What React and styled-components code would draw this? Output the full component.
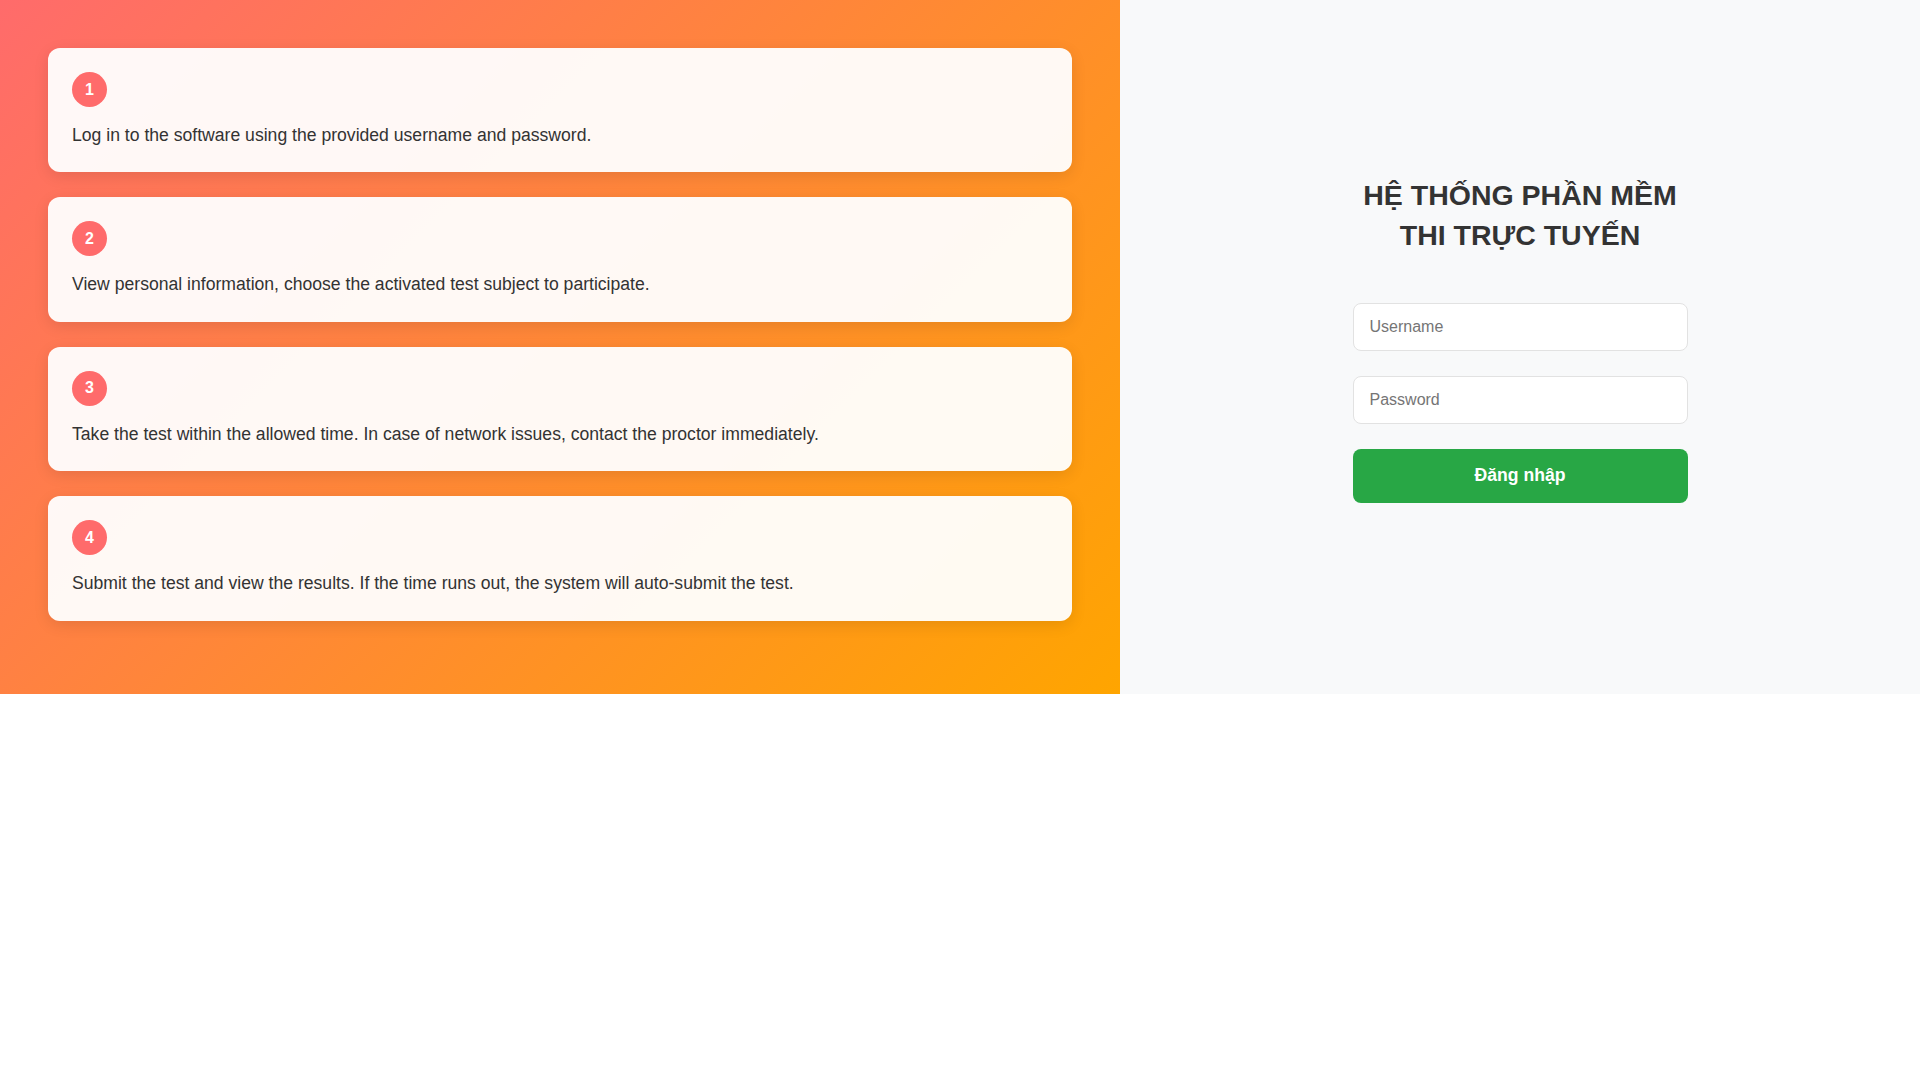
import React, { useState } from 'react'
import styled, { createGlobalStyle } from 'styled-components'

const GlobalStyle = createGlobalStyle`
  body {
    margin: 0;
    font-family: "Liberation Sans", Arial, sans-serif;
    color: #333;
  }
  * {
    box-sizing: border-box;
  }
`

const Page = styled.div`
  display: flex;
  width: 100%;
`

const StepsPanel = styled.div`
  width: 1120px;
  flex: 0 0 1120px;
  padding: 48px;
  background: linear-gradient(135deg, #ff6b6b 0%, #ffa500 100%);
`

const StepCard = styled.div`
  background: rgba(255, 255, 255, 0.95);
  border-radius: 12px;
  padding: 24px;
  margin-bottom: 25px;
  box-shadow: 0 4px 15px rgba(0, 0, 0, 0.1);
`

const StepNumber = styled.div`
  width: 35px;
  height: 35px;
  border-radius: 50%;
  background: #ff6b6b;
  color: #fff;
  font-weight: bold;
  font-size: 16px;
  display: flex;
  align-items: center;
  justify-content: center;
  margin-bottom: 15px;
`

const StepText = styled.p`
  margin: 0;
  font-size: 17.6px;
  line-height: 1.5;
  color: #333;
`

const LoginPanel = styled.div`
  flex: 1;
  background: #f8f9fa;
  display: flex;
  align-items: center;
  justify-content: center;
`

const LoginForm = styled.form`
  width: 335px;
  display: flex;
  flex-direction: column;
  margin-bottom: 16px;
`

const Title = styled.h1`
  margin: 0 -40px 48px;
  font-size: 28.5px;
  line-height: 40px;
  font-weight: bold;
  text-align: center;
  color: #333;
`

const Input = styled.input`
  height: 48px;
  padding: 0 16px;
  margin-bottom: 25px;
  border: 1px solid #e2e2e2;
  border-radius: 8px;
  background: #fff;
  font-family: "Liberation Sans", Arial, sans-serif;
  font-size: 16px;
  color: #333;
  outline: none;

  &::placeholder {
    color: #757575;
  }
`

const SubmitButton = styled.button`
  height: 54px;
  border: none;
  border-radius: 8px;
  background: #28a745;
  color: #fff;
  font-family: "Liberation Sans", Arial, sans-serif;
  font-size: 17.6px;
  font-weight: bold;
  cursor: pointer;
`

const steps = [
  'Log in to the software using the provided username and password.',
  'View personal information, choose the activated test subject to participate.',
  'Take the test within the allowed time. In case of network issues, contact the proctor immediately.',
  'Submit the test and view the results. If the time runs out, the system will auto-submit the test.',
]

const App = () => {
  const [form, setForm] = useState({ username: '', password: '' })

  const changeHandler = e => {
    setForm({ ...form, [e.target.name]: e.target.value })
  }

  const handleSubmit = e => {
    e.preventDefault()
  }

  return (
    <>
      <GlobalStyle />
      <Page>
        <StepsPanel>
          {steps.map((text, i) => (
            <StepCard key={i}>
              <StepNumber>{i + 1}</StepNumber>
              <StepText>{text}</StepText>
            </StepCard>
          ))}
        </StepsPanel>
        <LoginPanel>
          <LoginForm onSubmit={handleSubmit}>
            <Title>
              HỆ THỐNG PHẦN MỀM
              <br />
              THI TRỰC TUYẾN
            </Title>
            <Input type='text' name='username' placeholder='Username' value={form.username} onChange={changeHandler} />
            <Input type='password' name='password' placeholder='Password' value={form.password} onChange={changeHandler} />
            <SubmitButton type='submit'>Đăng nhập</SubmitButton>
          </LoginForm>
        </LoginPanel>
      </Page>
    </>
  )
}

export default App
